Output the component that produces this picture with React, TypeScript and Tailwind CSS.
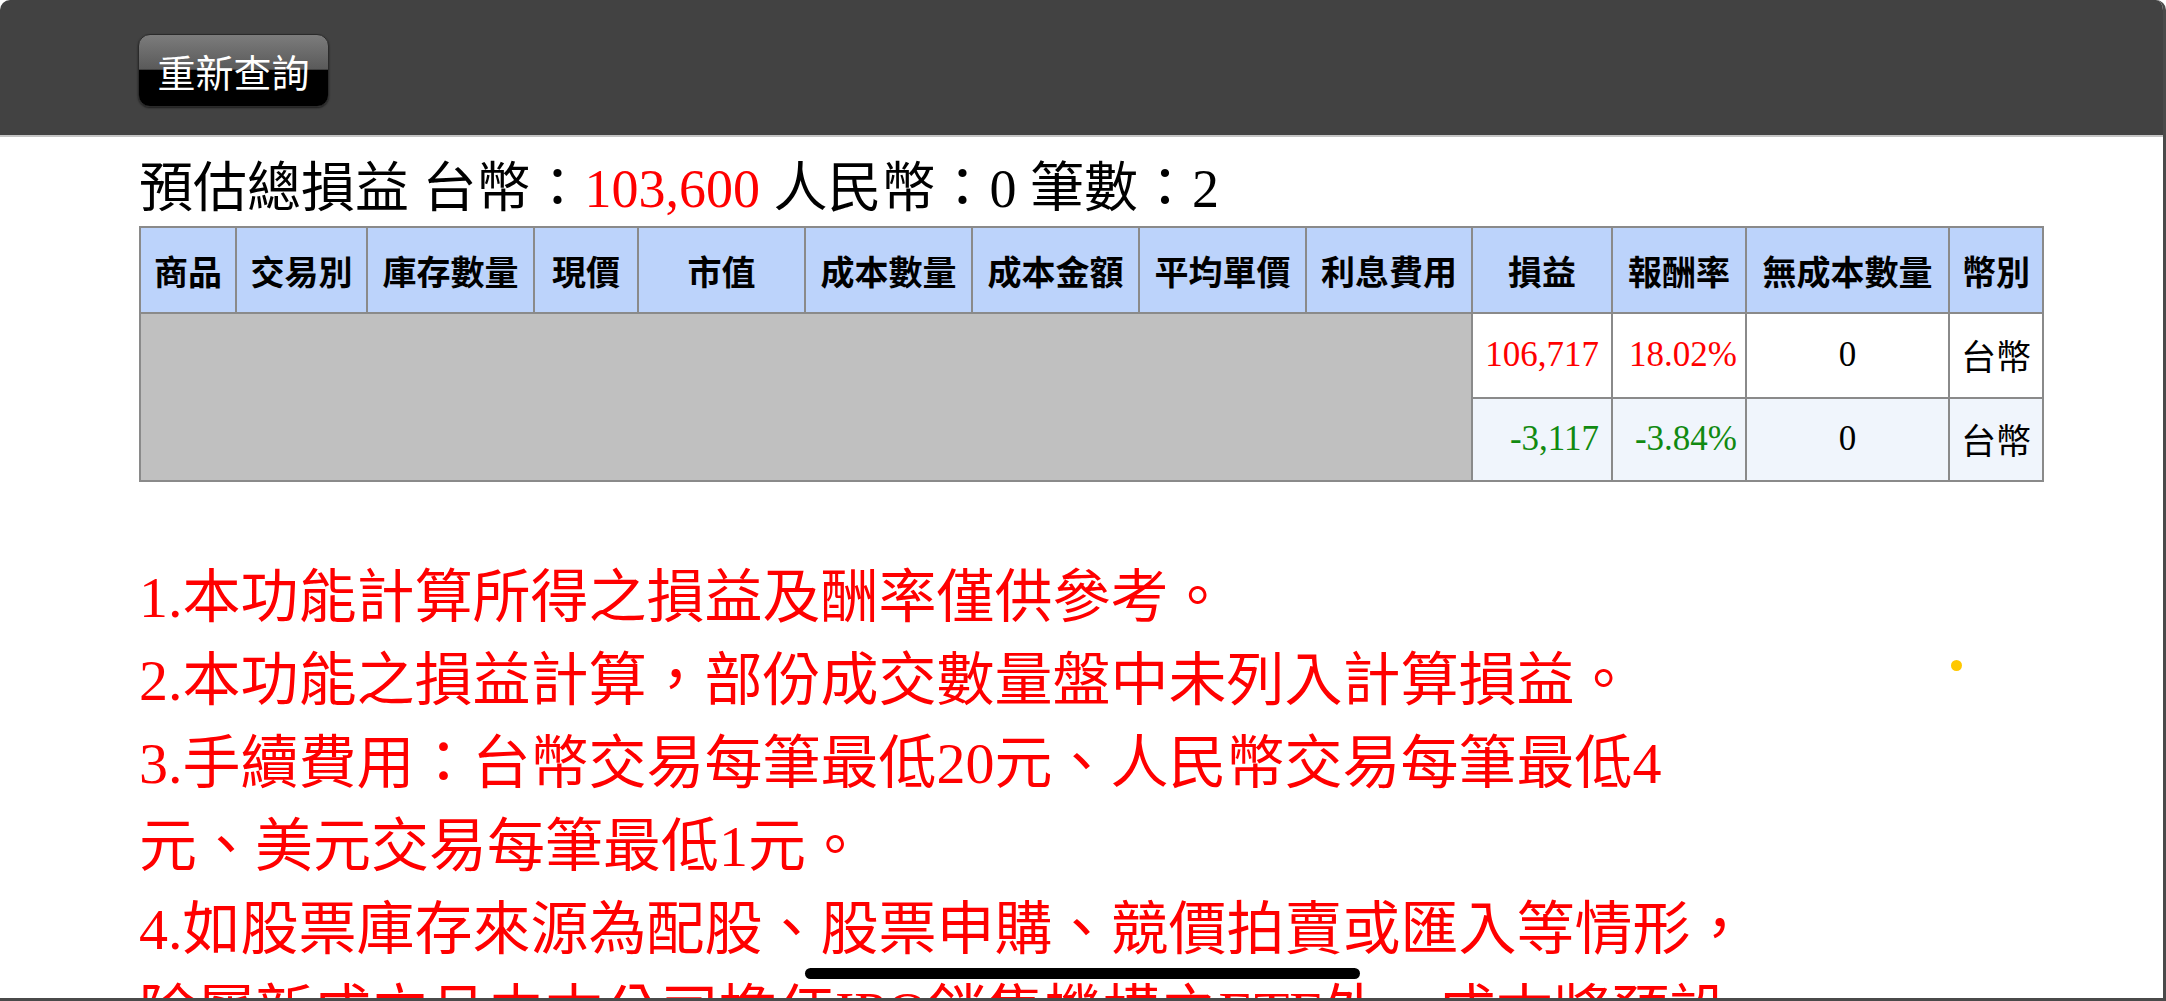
import React from 'react'

const cjkSans = '"Noto Sans CJK TC", "Noto Sans", sans-serif'
const mixedSerif = '"Liberation Serif", "Noto Sans CJK TC", serif'

const columns = [
  { label: '商品', w: 96 },
  { label: '交易別', w: 131 },
  { label: '庫存數量', w: 167 },
  { label: '現價', w: 104 },
  { label: '市值', w: 167 },
  { label: '成本數量', w: 167 },
  { label: '成本金額', w: 167 },
  { label: '平均單價', w: 167 },
  { label: '利息費用', w: 166 },
  { label: '損益', w: 140 },
  { label: '報酬率', w: 134 },
  { label: '無成本數量', w: 203 },
  { label: '幣別', w: 94 },
]

const rows = [
  { pl: '106,717', rate: '18.02%', noCost: '0', currency: '台幣', up: true },
  { pl: '-3,117', rate: '-3.84%', noCost: '0', currency: '台幣', up: false },
]

const notes = [
  '1.本功能計算所得之損益及酬率僅供參考。',
  '2.本功能之損益計算，部份成交數量盤中未列入計算損益。',
  '3.手續費用：台幣交易每筆最低20元、人民幣交易每筆最低4元、美元交易每筆最低1元。',
  '4.如股票庫存來源為配股、股票申購、競價拍賣或匯入等情形，除屬新成立且由本公司擔任IPO銷售機構之ETF外，成本將預設為0，損益僅供參考。',
]

export default function App() {
  return (
    <div className="relative w-[2166px] h-[1001px] overflow-hidden bg-white border-r-[3px] border-b-[3px] border-[#4a4a4a] rounded-t-[10px]">
      {/* Header */}
      <header className="h-[137px] bg-[#424242] border-b-2 border-[#c4c4c4] pl-[138px] pt-[34px]">
        <button
          className="w-[191px] h-[73px] rounded-[12px] border border-[#2a2a2a] text-white text-[38px] leading-none bg-[linear-gradient(to_bottom,#7c7c7c_0%,#5a5a5a_48%,#000000_50%,#000000_100%)] shadow-[0_1px_2px_rgba(0,0,0,0.6)]"
          style={{ fontFamily: cjkSans }}
        >
          重新查詢
        </button>
      </header>

      <main className="pl-[139px]">
        {/* Summary */}
        <div className="mt-[22px] h-[60px] text-[54px] leading-[60px] text-black whitespace-nowrap" style={{ fontFamily: mixedSerif }}>
          預估總損益 台幣：<span className="text-[#ff0000]">103,600</span> 人民幣：0 筆數：2
        </div>

        {/* Table */}
        <table className="mt-[7px] table-fixed border-collapse border-2 border-[#8a8a8a] w-[1903px]">
          <colgroup>
            {columns.map((c) => (
              <col key={c.label} style={{ width: c.w }} />
            ))}
          </colgroup>
          <thead>
            <tr className="h-[86px] bg-[#bcd3fb]">
              {columns.map((c) => (
                <th
                  key={c.label}
                  className="border-2 border-[#8a8a8a] px-0 text-[34px] font-bold text-black text-center whitespace-nowrap"
                  style={{ fontFamily: cjkSans }}
                >
                  {c.label}
                </th>
              ))}
            </tr>
          </thead>
          <tbody className="text-[35px]" style={{ fontFamily: mixedSerif }}>
            {rows.map((r, i) => (
              <tr key={i} className={i === 0 ? 'h-[85px] bg-white' : 'h-[83px] bg-[#f0f5fc]'}>
                {i === 0 && <td colSpan={9} rowSpan={2} className="bg-[#c0c0c0] border-2 border-[#8a8a8a]" />}
                <td className={`border-2 border-[#8a8a8a] text-right pr-[12px] ${r.up ? 'text-[#ff0000]' : 'text-[#118a11]'}`}>{r.pl}</td>
                <td className={`border-2 border-[#8a8a8a] text-right pr-[8px] ${r.up ? 'text-[#ff0000]' : 'text-[#118a11]'}`}>{r.rate}</td>
                <td className="border-2 border-[#8a8a8a] text-center text-black">{r.noCost}</td>
                <td className="border-2 border-[#8a8a8a] text-center text-black" style={{ fontFamily: cjkSans }}>
                  {r.currency}
                </td>
              </tr>
            ))}
          </tbody>
        </table>

        {/* Notes */}
        <div className="mt-[74px] w-[1621px] text-[58px] leading-[83px] text-[#ff0000]" style={{ fontFamily: mixedSerif }}>
          {notes.map((n) => (
            <p key={n}>{n}</p>
          ))}
        </div>
      </main>

      {/* overlays */}
      <div className="absolute left-[1951px] top-[660px] w-[11px] h-[11px] rounded-full bg-[#ffc800]" />
      <div className="absolute left-[805px] top-[968px] w-[555px] h-[11px] rounded-full bg-black" />
    </div>
  )
}
